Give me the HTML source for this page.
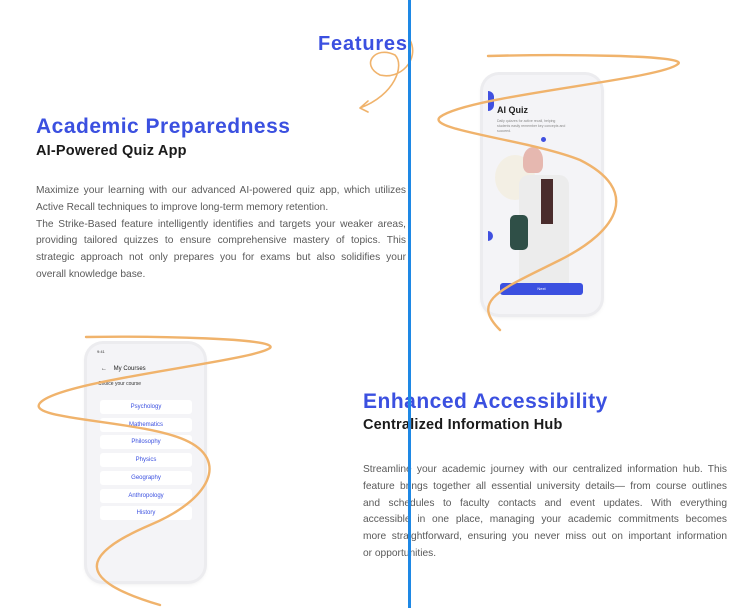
<!DOCTYPE html>
<html><head><meta charset="utf-8"><style>
body{margin:0;width:751px;height:608px;background:#fff;position:relative;overflow:hidden;font-family:"Liberation Sans",sans-serif}
.abs{position:absolute}
h1{position:absolute;margin:0;font-size:21px;font-weight:600;color:#3b50e0;letter-spacing:.5px}
h2{position:absolute;margin:0;font-size:14.5px;font-weight:700;color:#1a1a1a;letter-spacing:.2px}
.p{position:absolute;font-size:10.2px;line-height:16.8px;color:#5a5a5a}
.p div{text-align:justify;text-align-last:justify;white-space:nowrap}
.p div.l{text-align-last:left}
.phone{position:absolute;border-radius:16px;background:#f4f4f7;box-shadow:0 0 0 3px #ececef,0 2px 6px rgba(0,0,0,.12)}
.row{position:absolute;left:13px;width:92px;height:14px;background:#fff;border-radius:3px;font-size:6px;color:#3b50e0;text-align:center;line-height:14px}
</style></head><body>
<div class="abs" style="left:318px;top:33px;font-size:20px;font-weight:600;color:#3b50e0;letter-spacing:.8px">Features</div>
<h1 style="left:36px;top:115px">Academic Preparedness</h1>
<h2 style="left:36px;top:143px">AI-Powered Quiz App</h2>
<div class="p" style="left:36px;top:183px;width:370px">
<div>Maximize your learning with our advanced AI-powered quiz app, which utilizes</div>
<div class="l">Active Recall techniques to improve long-term memory retention.</div>
<div>The Strike-Based feature intelligently identifies and targets your weaker areas,</div>
<div>providing tailored quizzes to ensure comprehensive mastery of topics. This</div>
<div>strategic approach not only prepares you for exams but also solidifies your</div>
<div class="l">overall knowledge base.</div>
</div>
<h1 style="left:363px;top:390px">Enhanced Accessibility</h1>
<h2 style="left:363px;top:417px">Centralized Information Hub</h2>
<div class="p" style="left:363px;top:462px;width:364px">
<div>Streamline your academic journey with our centralized information hub. This</div>
<div>feature brings together all essential university details— from course outlines</div>
<div>and schedules to faculty contacts and event updates. With everything</div>
<div>accessible in one place, managing your academic commitments becomes</div>
<div>more straightforward, ensuring you never miss out on important information</div>
<div class="l">or opportunities.</div>
</div>

<div class="phone" style="left:483px;top:75px;width:118px;height:239px">
<div class="abs" style="left:14px;top:30px;font-size:9px;font-weight:700;color:#222">AI Quiz</div>
<div class="abs" style="left:14px;top:44px;width:70px;font-size:3.5px;color:#888;line-height:5px">Daily quizzes for active recall, helping students easily remember key concepts and succeed.</div>
<div class="abs" style="left:5px;top:16px;width:6px;height:20px;background:#4050e0;border-radius:0 10px 10px 0"></div>
<div class="abs" style="left:58px;top:62px;width:5px;height:5px;background:#4050e0;border-radius:50%"></div>
<div class="abs" style="left:19px;top:87px;width:5px;height:5px;background:#4050e0;border-radius:50%"></div>
<div class="abs" style="left:5px;top:156px;width:5px;height:10px;background:#4050e0;border-radius:0 6px 6px 0"></div>
<div class="abs" style="left:12px;top:80px;width:40px;height:45px;background:#f3efe4;border-radius:50%"></div>
<div class="abs" style="left:40px;top:72px;width:20px;height:26px;background:#e6b8b0;border-radius:50% 50% 30% 30%"></div>
<div class="abs" style="left:36px;top:100px;width:50px;height:110px;background:#ececec;border-radius:10px 10px 0 0"></div>
<div class="abs" style="left:58px;top:104px;width:12px;height:45px;background:#4a2c2c"></div>
<div class="abs" style="left:27px;top:140px;width:18px;height:35px;background:#2f4f47;border-radius:5px"></div>
<div class="abs" style="left:17px;top:208px;width:83px;height:12px;background:#3b50e0;border-radius:3px;color:#fff;font-size:4px;text-align:center;line-height:12px">Next</div>
</div>

<div class="phone" style="left:87px;top:344px;width:117px;height:237px">
<div class="abs" style="left:10px;top:5px;font-size:4px;color:#333">9:41</div>
<div class="abs" style="left:14px;top:22px;font-size:6px;color:#222">←&nbsp;&nbsp;&nbsp; My Courses</div>
<div class="abs" style="left:11px;top:37px;font-size:5px;color:#333">Choice your course</div>
<div class="row" style="top:56px">Psychology</div>
<div class="row" style="top:74px">Mathematics</div>
<div class="row" style="top:91px">Philosophy</div>
<div class="row" style="top:109px">Physics</div>
<div class="row" style="top:127px">Geography</div>
<div class="row" style="top:145px">Anthropology</div>
<div class="row" style="top:162px">History</div>
</div>

<svg class="abs" style="left:0;top:0" width="751" height="608" fill="none" stroke="#f0b36c" stroke-width="2.4" stroke-linecap="round">
<path d="M488 56 C560 54 690 55 678 64 C660 80 470 95 440 117 C425 130 530 140 580 160 C640 190 620 230 560 260 C500 290 470 300 500 330"/>
<path d="M86 337 C150 336 280 338 270 348 C250 362 60 380 40 403 C25 420 140 420 185 440 C230 460 210 500 150 525 C80 555 75 580 160 605"/>
<path d="M410 40 C420 60 400 80 380 75 C360 65 375 45 395 55 C405 65 395 95 360 108 M360 108 L368 101 M360 108 L368 112" stroke-width="1.6"/>
</svg>
<div class="abs" style="left:408px;top:0;width:3px;height:608px;background:#1e88e5"></div>
</body></html>
